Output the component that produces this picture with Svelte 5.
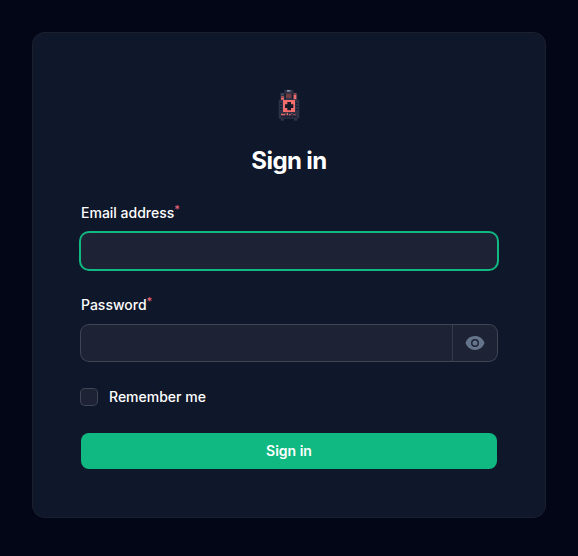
<script>
  let email = $state('');
  let password = $state('');
  let remember = $state(false);
  let visible = $state(false);
</script>

<main>
  <section class="card">
    <header>
      <svg class="logo" viewBox="0 0 120 120" role="img" aria-label="Backpack">
        <!-- bag, side pouches and feet -->
        <path fill="#2c3145" d="M46 17h27v9h12v21h6v56h-6v7h-10v-6H45v6H35v-6h-6V47h5V26h12z" />
        <path fill="#151b2d" d="M33 57h6v3h-6zM33 66h6v3h-6zM33 75h6v3h-6zM81 57h6v3h-6zM81 66h6v3h-6zM81 75h6v3h-6zM36 97h48v3H36z" />
        <!-- handle and top pocket -->
        <path fill="#8a91a3" d="M54 18h10v5H54z" />
        <path fill="#141a2c" d="M47 27h3v18h-3zM69 27h3v18h-3z" />
        <path fill="#713c41" d="M51 29h16v13H51z" />
        <path fill="#42485a" d="M36 28h8v6h-8z" />
        <path fill="#a64e54" d="M36 36h9v5h-9z" />
        <path fill="#f06b6d" d="M36 41h9v6h-9zM74 32h8v14h-8z" />
        <path fill="#90484e" d="M74 27h8v5h-8z" />
        <!-- first aid patch -->
        <path fill="#f56c6d" d="M42 48h36v36H42z" />
        <path fill="#151827" d="M55 54h11v7h7v11h-7v7H55v-7h-7V61h7z" />
        <!-- lower trim -->
        <path fill="#df6368" d="M36 89h12v5H36zM53 86h4v8h-4zM60 90h5v4h-5z" />
        <path fill="#804249" d="M48 87h3v4h-3zM66 87h4v4h-4zM72 90h9v4h-9z" />
      </svg>
      <h1>Sign in</h1>
    </header>
    <form onsubmit={(e) => e.preventDefault()}>
      <div class="field">
        <label for="email">Email address<sup>*</sup></label>
        <div class="control active"><input id="email" type="email" bind:value={email} /></div>
      </div>
      <div class="field">
        <label for="password">Password<sup>*</sup></label>
        <div class="control">
          <input id="password" type={visible ? 'text' : 'password'} bind:value={password} />
          <button class="reveal" type="button" aria-label="Show password" onclick={() => (visible = !visible)}>
            <svg viewBox="0 0 20 20" width="20" height="20" fill="currentColor">
              <path d="M10 12.5a2.5 2.5 0 1 0 0-5 2.5 2.5 0 0 0 0 5Z" />
              <path fill-rule="evenodd" clip-rule="evenodd" d="M.664 10.59a1.651 1.651 0 0 1 0-1.186A10.004 10.004 0 0 1 10 3c4.257 0 7.893 2.66 9.336 6.41.147.381.146.804 0 1.186A10.004 10.004 0 0 1 10 17c-4.257 0-7.893-2.66-9.336-6.41ZM14 10a4 4 0 1 1-8 0 4 4 0 0 1 8 0Z" />
            </svg>
          </button>
        </div>
      </div>
      <label class="remember"><input type="checkbox" bind:checked={remember} /><span>Remember me</span></label>
      <button class="submit" type="submit">Sign in</button>
    </form>
  </section>
</main>

<style>
  :global(body) {
    margin: 0;
    background: #020617;
  }
  main {
    box-sizing: border-box;
    min-height: 556px;
    padding: 33px;
    font-family: Inter, 'Liberation Sans', sans-serif;
    color: #fff;
    background: #020617;
  }
  .card {
    box-sizing: border-box;
    width: 512px;
    height: 484px;
    padding: 48px;
    border-radius: 12px;
    background: #0f172a;
    box-shadow: 0 0 0 1px rgba(255, 255, 255, 0.1);
  }
  header {
    display: flex;
    flex-direction: column;
    align-items: center;
    height: 120px;
  }
  .logo {
    width: 40px;
    height: 40px;
    margin-top: 3px;
  }
  h1 {
    margin: 21px 0 0;
    font-size: 24px;
    line-height: 32px;
    font-weight: 700;
    letter-spacing: -0.6px;
  }
  form {
    display: grid;
    gap: 24px;
  }
  .field {
    display: grid;
    gap: 8px;
  }
  label {
    font-size: 14px;
    line-height: 24px;
    font-weight: 500;
    height: 24px;
  }
  sup {
    font-size: 11px;
    line-height: 0;
    position: relative;
    top: -0.45em;
    vertical-align: baseline;
    color: #ee667c;
  }
  .control {
    display: flex;
    height: 36px;
    border-radius: 8px;
    background: #1e2235;
    box-shadow: 0 0 0 1px #3f4555;
  }
  .control.active {
    box-shadow: 0 0 0 2px #10b981;
  }
  .control input {
    flex: 1;
    min-width: 0;
    border: 0;
    outline: 0;
    padding: 0 12px;
    background: transparent;
    color: #fff;
    font: inherit;
    font-size: 14px;
  }
  .reveal {
    display: flex;
    align-items: center;
    justify-content: center;
    box-sizing: border-box;
    width: 45px;
    padding: 0;
    border: 0;
    border-left: 1px solid #353b4b;
    background: transparent;
    color: #64748b;
  }
  .remember {
    display: flex;
    align-items: center;
    gap: 12px;
  }
  .remember input {
    appearance: none;
    width: 16px;
    height: 16px;
    margin: 0;
    border-radius: 4px;
    background: #1e2235;
    box-shadow: 0 0 0 1px #3f4555;
  }
  .remember input:checked {
    background: #10b981;
  }
  .submit {
    height: 36px;
    padding: 0;
    border: 0;
    border-radius: 8px;
    background: #10b981;
    color: #fff;
    font: 600 14px/20px Inter, 'Liberation Sans', sans-serif;
  }
</style>
